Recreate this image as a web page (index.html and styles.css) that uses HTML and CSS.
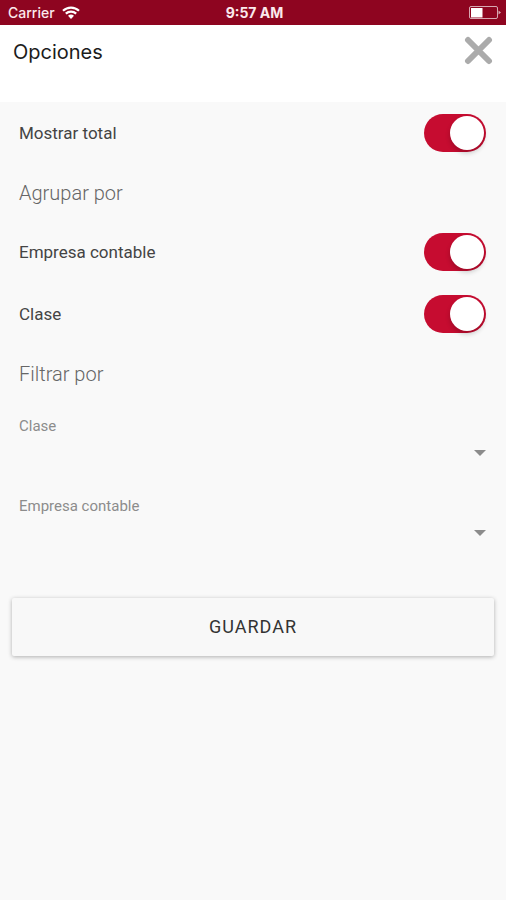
FILE: index.html
```html
<!DOCTYPE html>
<html lang="es">
<head>
<meta charset="utf-8">
<meta name="viewport" content="width=device-width, initial-scale=1">
<title>Opciones</title>
<link rel="stylesheet" href="styles.css">
</head>
<body>
<div class="status-bar">
  <div class="carrier">
    <span>Carrier</span>
    <svg class="wifi" viewBox="0 0 18 13" aria-hidden="true">
      <path d="M1 4.8a11.6 11.6 0 0 1 16 0M3.8 7.6a7.6 7.6 0 0 1 10.4 0" fill="none" stroke="currentColor" stroke-width="2.2"/>
      <path d="M9 13 6 9.800a4.400 4.400 0 0 1 6 0z" fill="currentColor"/>
    </svg>
  </div>
  <span class="clock">9:57 AM</span>
  <svg class="battery" viewBox="0 0 32 14" aria-hidden="true">
    <rect x="0.500" y="0.500" width="28" height="12" rx="1.500" fill="none" stroke="currentColor" opacity="0.650"/>
    <rect x="2" y="2" width="11.500" height="9.500" fill="currentColor"/>
    <path d="M29.500 4.500 32 6.500 29.500 8.500z" fill="currentColor" opacity="0.650"/>
  </svg>
</div>
<header class="header">
  <h1 class="title">Opciones</h1>
  <button class="close" type="button" aria-label="Cerrar">
    <svg viewBox="0 0 30 30" aria-hidden="true"><path d="M4 4 25 25M25 4 4 25" stroke="currentColor" stroke-width="6" stroke-linecap="round"/></svg>
  </button>
</header>
<main>
  <form class="options">
    <label class="row"><span>Mostrar total</span><input class="switch" type="checkbox" role="switch" checked></label>
    <h2 class="section">Agrupar por</h2>
    <label class="row"><span>Empresa contable</span><input class="switch" type="checkbox" role="switch" checked></label>
    <label class="row"><span>Clase</span><input class="switch" type="checkbox" role="switch" checked></label>
    <h2 class="section">Filtrar por</h2>
    <div class="field">
      <label for="clase">Clase</label>
      <div class="picker">
        <select id="clase"><option value=""></option></select>
        <svg class="arrow" viewBox="0 0 12 6" aria-hidden="true"><path d="M0 0h12L6 6z" fill="currentColor"/></svg>
      </div>
    </div>
    <div class="field">
      <label for="empresa">Empresa contable</label>
      <div class="picker">
        <select id="empresa"><option value=""></option></select>
        <svg class="arrow" viewBox="0 0 12 6" aria-hidden="true"><path d="M0 0h12L6 6z" fill="currentColor"/></svg>
      </div>
    </div>
    <button class="save" type="submit">GUARDAR</button>
  </form>
</main>
</body>
</html>
```
FILE: styles.css
```css
* {
  box-sizing: border-box;
}

body {
  margin: 0;
  min-height: 100vh;
  background: #f9f9f9;
  color: #444;
  font-family: Roboto, "Liberation Sans", sans-serif;
}

.status-bar {
  display: grid;
  grid-template-columns: 1fr auto 1fr;
  align-items: center;
  height: 25px;
  padding: 0 5px 0 8px;
  background: #8e0520;
  color: #fbe9ec;
  font: 500 14px/24px Inter, sans-serif;
}

.carrier {
  display: flex;
  align-items: center;
  gap: 7px;
}

.wifi {
  width: 18px;
  height: 13px;
  color: #fff;
}

.clock {
  font-weight: 700;
}

.battery {
  justify-self: end;
  width: 32px;
  height: 14px;
  color: #fff;
}

.header {
  display: flex;
  justify-content: space-between;
  align-items: flex-start;
  height: 77px;
  padding: 11px 12px 0 13px;
  background: #fff;
}

.title {
  margin: 0;
  color: #1c1c1c;
  font: 400 20px/32px Inter, sans-serif;
}

.close {
  width: 30px;
  height: 30px;
  padding: 0;
  border: 0;
  background: none;
  color: #ababab;
}

.close svg {
  display: block;
}

.row {
  display: flex;
  justify-content: space-between;
  align-items: center;
  height: 62px;
  padding: 0 20px 0 19px;
  font-size: 17px;
}

.switch {
  appearance: none;
  display: flex;
  justify-content: flex-end;
  width: 62px;
  height: 38px;
  margin: 0;
  padding: 2px;
  border-radius: 19px;
  background: #c60c30;
}

.switch::before {
  content: "";
  width: 34px;
  height: 34px;
  border-radius: 50%;
  background: #fff;
  box-shadow: 0 3px 5px rgba(0, 0, 0, 0.2);
}

.switch:not(:checked) {
  justify-content: flex-start;
  background: #ccc;
}

.section {
  margin: 0;
  padding: 2px 19px 0;
  color: #666;
  font-size: 20px;
  font-weight: 300;
  line-height: 55px;
}

.field {
  padding: 16px 20px 10px 19px;
  color: #8c8c8c;
  font-size: 15px;
  line-height: 16px;
}

.field label {
  display: block;
}

.picker {
  display: grid;
  align-items: center;
}

.picker > * {
  grid-area: 1 / 1;
}

.picker select {
  appearance: none;
  width: 100%;
  height: 38px;
  border: 0;
  background: transparent;
  color: #444;
  font: inherit;
}

.arrow {
  justify-self: end;
  width: 12px;
  height: 6px;
  color: #8c8c8c;
  pointer-events: none;
}

.save {
  display: block;
  width: calc(100% - 24px);
  height: 58px;
  margin: 36px 12px 0;
  border: 0;
  border-radius: 2px;
  background: #f8f8f8;
  color: #333;
  font: 400 18px/24px Roboto, sans-serif;
  letter-spacing: 1px;
  box-shadow: 0 1px 4px rgba(0, 0, 0, 0.3);
}
```
